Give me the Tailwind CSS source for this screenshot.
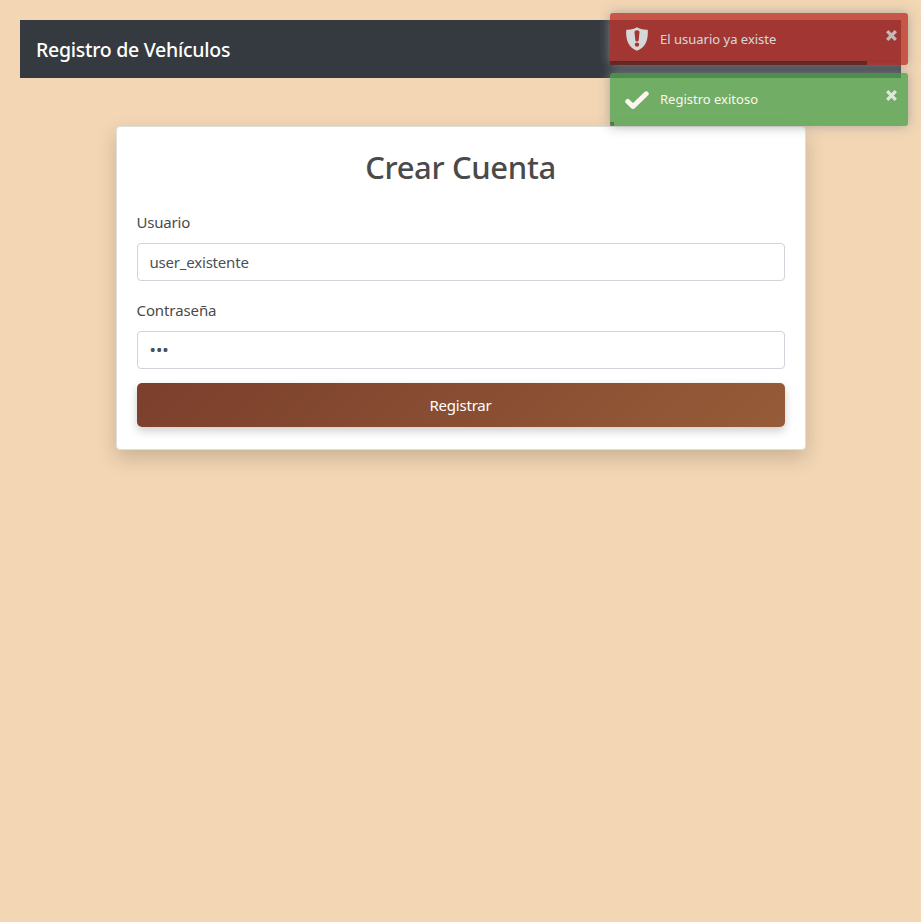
<!DOCTYPE html>
<html lang="es">
<head>
<meta charset="utf-8">
<title>Registro de Vehículos</title>
<script src="https://cdn.jsdelivr.net/npm/@tailwindcss/browser@4"></script>
</head>
<body class="min-h-screen bg-[#f3d7b4] p-5 font-['Noto_Sans',sans-serif] text-[15px] text-[#4a4a4a]">
<nav class="flex h-[58px] items-center bg-[#343a40] px-4 pt-[2px]">
  <a class="text-[19.5px] font-medium tracking-[-0.27px] text-white">Registro de Vehículos</a>
</nav>
<main class="mx-auto mt-12 h-[324px] w-[690px] rounded-[4px] border border-[#dfdfdf] bg-white px-5 pt-[19px] shadow-[0_8px_20px_rgba(0,0,0,0.18)]">
  <h2 class="mb-[22px] h-[42px] text-center text-[31px] leading-[42px] font-medium tracking-[-0.35px]">Crear Cuenta</h2>
  <form>
    <label class="block h-6 leading-6 tracking-[-0.2px]">Usuario</label>
    <div class="mt-[9px] flex h-[38px] items-center rounded-[4px] border border-[#ced4da] px-3 tracking-[-0.2px] text-[#495057]">user_existente</div>
    <label class="mt-[17px] block h-6 leading-6 tracking-[-0.1px]">Contraseña</label>
    <div class="mt-[9px] flex h-[38px] items-center rounded-[4px] border border-[#ced4da] px-3 text-[17px] text-[#495057]">•••</div>
    <button type="button" class="mt-[14px] block h-11 w-full rounded-[5px] bg-[linear-gradient(135deg,#7b3f2c,#965c38)] text-center tracking-[-0.2px] text-white shadow-[0_4px_10px_rgba(0,0,0,0.2)]">Registrar</button>
  </form>
</main>
<aside class="absolute top-[13px] left-[610px] flex w-[298px] flex-col gap-2 text-[13px] text-white">
  <div class="relative flex h-[52px] items-center rounded-[3px] bg-[#bd362f] pl-[15px] opacity-80 shadow-[0_0_12px_#999]">
    <svg class="size-6" viewBox="0 0 24 24" fill="currentColor"><path fill-rule="evenodd" d="M12 .3C9.500 2 5.400 3.100 1.200 2.800c-.5 10 2 17.600 10.800 21 8.800-3.400 11.300-11 10.800-21C18.600 3.100 14.500 2 12 .3ZM9.500 5.200c0-1.300.9-2 2.500-2s2.500.7 2.500 2l-.8 7.700c-.1 1-.7 1.500-1.700 1.500s-1.600-.5-1.700-1.500ZM12 15.400a2.200 2.200 0 1 1 0 4.400 2.200 2.200 0 0 1 0-4.400Z"/></svg>
    <span class="mt-px ml-[11px]">El usuario ya existe</span>
    <svg class="absolute top-[16.500px] right-[11px] size-[11px]" viewBox="0 0 11 11" fill="none" stroke="currentColor" stroke-width="3.300" opacity=".8"><path d="m1.200 1.200 8.600 8.600m0-8.600-8.600 8.600"/></svg>
    <div class="absolute bottom-0 left-0 h-1 w-[257px] bg-black/40"></div>
  </div>
  <div class="relative flex h-[53px] items-center rounded-[3px] bg-[#51a351] pl-[15px] opacity-80 shadow-[0_0_12px_#999]">
    <svg class="size-6" viewBox="0 0 24 24" fill="none" stroke="currentColor" stroke-width="5" stroke-linecap="round" stroke-linejoin="round"><path d="m2.800 13.500 5.200 5L21.200 5.800"/></svg>
    <span class="mt-px ml-[11px]">Registro exitoso</span>
    <svg class="absolute top-[16.500px] right-[11px] size-[11px]" viewBox="0 0 11 11" fill="none" stroke="currentColor" stroke-width="3.300" opacity=".8"><path d="m1.200 1.200 8.600 8.600m0-8.600-8.600 8.600"/></svg>
    <div class="absolute bottom-0 left-0 h-1 w-1 bg-black/40"></div>
  </div>
</aside>
</body>
</html>
